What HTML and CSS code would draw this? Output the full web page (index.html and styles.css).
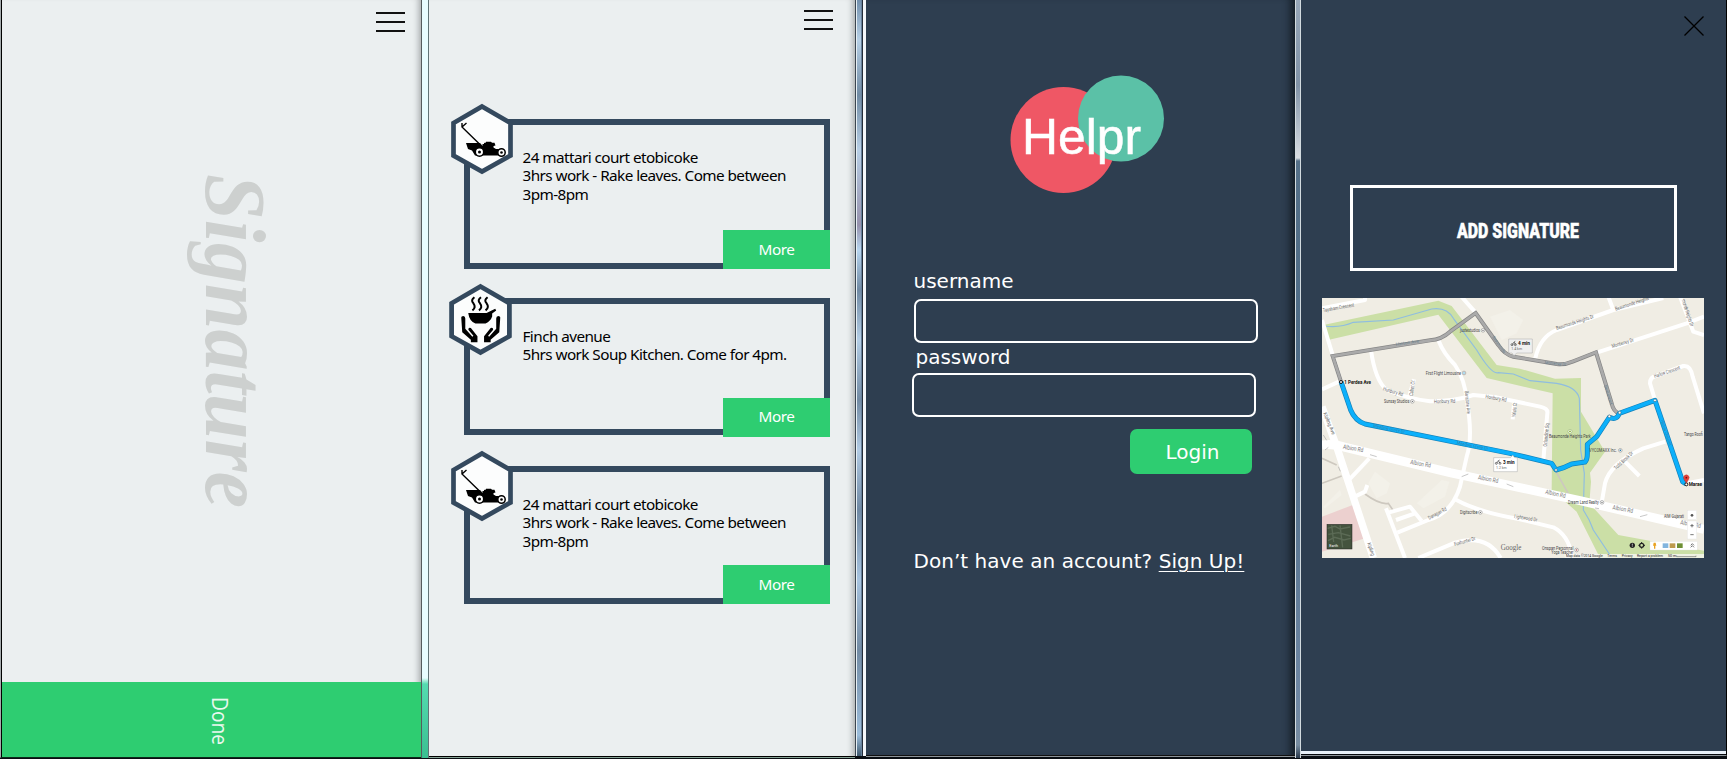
FILE: index.html
```
<!DOCTYPE html>
<html lang="en">
<head>
<meta charset="utf-8">
<title>Helpr</title>
<link rel="stylesheet" href="styles.css">
</head>
<body>
<svg width="0" height="0" class="defs" aria-hidden="true">
  <defs>
    <symbol id="hex" viewBox="0 0 64 72">
      <path d="M32 3.500 L60.500 20 V52.500 L32 68.500 L3.500 52.500 V20 Z" fill="#fcfdfd" stroke="#34495e" stroke-width="4.700"/>
    </symbol>
    <symbol id="mower" viewBox="0 0 64 72">
      <path d="M12 20 V24 L31 42.500 M12 24 L16.500 20" fill="none" stroke="#000" stroke-width="1.400"/>
      <path d="M16 40 H30 L32.500 43 V41 H34 V40 L36 39.500 V38.700 H41 L42 39.700 H44.500 L45.500 42.500 L43.500 43 V44.500 L46 46 H52 L55 50 L50 52.500 H25 L22 47.500 L18 46 Z" fill="#000"/>
      <circle cx="29.500" cy="49" r="4.200" fill="#fff" stroke="#000" stroke-width="1.500"/>
      <circle cx="29.500" cy="49" r="1.500"/>
      <circle cx="51.500" cy="49.500" r="3.700" fill="#fff" stroke="#000" stroke-width="1.500"/>
      <circle cx="51.500" cy="49.500" r="1.300"/>
    </symbol>
    <symbol id="soup" viewBox="0 0 64 72">
      <path d="M26 14 q-4 3 -1 6 q3 4 -1 7 M32.500 14 q-4 3 -1 6 q3 4 -1 7 M39 14 q-4 3 -1 6 q3 4 -1 7" fill="none" stroke="#000" stroke-width="2"/>
      <path d="M20 29.500 H38 L46.500 25.500 L47.500 27 L43.500 30 V33 Q42 37.500 37 40 H27 Q21 37.500 20 30 Z"/>
      <path id="hand" d="M13 34 Q13 32.500 15 32.500 Q17 32.500 17 35 V45 L24 53 L25 52 L20 46 Q20 43.500 22.500 44.500 L29 52.500 V58.500 H22.500 V56 L14 48.500 Z"/>
      <use href="#hand" transform="translate(64.500 0) scale(-1 1)"/>
    </symbol>
  </defs>
</svg>
<main class="screens">
  <section class="screen sign">
    <header class="bar"><span class="menu"><i></i><i></i><i></i></span></header>
    <svg class="signature" viewBox="0 0 419 640">
      <text transform="translate(204 132) rotate(90)" x="0" y="0" textLength="334" lengthAdjust="spacingAndGlyphs">Signature</text>
    </svg>
    <div class="done">
      <svg viewBox="0 0 60 75" width="60" height="75"><text transform="translate(23 15) rotate(90)" textLength="48" lengthAdjust="spacingAndGlyphs">Done</text></svg>
    </div>
  </section>
  <div class="gutter g1"></div>
  <section class="screen jobs">
    <header class="bar"><span class="menu"><i></i><i></i><i></i></span></header>
    <article class="job first">
      <svg class="badge"><use href="#hex"/><use href="#mower"/></svg>
      <p>24 mattari court etobicoke<br>3hrs work - Rake leaves. Come between<br>3pm-8pm</p>
      <a class="more">More</a>
    </article>
    <article class="job second">
      <svg class="badge"><use href="#hex"/><use href="#soup"/></svg>
      <p>Finch avenue<br>5hrs work Soup Kitchen. Come for 4pm.</p>
      <a class="more">More</a>
    </article>
    <article class="job third">
      <svg class="badge"><use href="#hex"/><use href="#mower"/></svg>
      <p>24 mattari court etobicoke<br>3hrs work - Rake leaves. Come between<br>3pm-8pm</p>
      <a class="more">More</a>
    </article>
  </section>
  <div class="gutter g2"><i></i></div>
  <section class="screen login">
    <svg class="logo" viewBox="0 0 160 124">
      <circle cx="56.500" cy="68" r="53" fill="#ef5765"/>
      <circle cx="114" cy="46.500" r="43" fill="#5bc1a7"/>
      <text x="15" y="82" textLength="119" lengthAdjust="spacingAndGlyphs">Helpr</text>
    </svg>
    <form>
      <label>username</label>
      <div class="field"></div>
      <label class="pw">password</label>
      <div class="field pwf"></div>
      <div class="submit"><span>Login</span></div>
    </form>
    <p class="signup">Don’t have an account? <a>Sign Up!</a></p>
  </section>
  <div class="gutter g3"></div>
  <section class="screen detail">
    <header class="close"><svg viewBox="0 0 20 20" width="20" height="20"><path d="M.5 .5 L19.500 19.500 M19.500 .5 L.5 19.500" stroke="#000" stroke-width="1.300"/></svg></header>
    <div class="add"><svg viewBox="0 0 122 24" width="122" height="24"><text x="0" y="19" textLength="122" lengthAdjust="spacingAndGlyphs">ADD SIGNATURE</text></svg></div>
    <svg class="map" viewBox="36 24 1146 780" preserveAspectRatio="none">
      <rect x="36" y="24" width="1146" height="780" fill="#f0ede4"/>
      <path d="M36 680 L128 645 L165 745 L36 785 Z" fill="#ecd0cf"/>
      <g fill="#cbdfa6">
        <path d="M40 105 L385 32 L425 48 L560 225 L630 236 L735 266 L813 264 V365 L885 485 L840 548 L843 575 L838 640 L925 735 L1182 782 V804 H870 L800 665 L725 600 L728 310 L530 264 L385 74 L54 150 Z"/>
      </g>
      <g fill="#f3f1e9">
        <path d="M540 80 L600 60 L640 90 L620 130 L575 150 Z"/><path d="M175 580 L195 545 L240 580 L230 610 L200 625 Z"/><path d="M320 640 L395 570 L418 575 L405 620 L340 655 Z"/><path d="M40 650 L90 600 L95 615 L45 655 Z"/>
      </g>
      <path d="M42 108 Q90 115 130 97 L250 90 Q320 70 365 57 Q410 50 430 85 L500 180 Q545 255 565 248 L610 252 L660 272 L740 280 Q800 290 808 325 L812 480 L823 550 L820 660 Q840 690 850 720 L900 795" fill="none" stroke="#8fbde0" stroke-width="3.500"/>
      <g fill="none" stroke="#cdc8bf" stroke-width="5"><path d="M36 505 L80 525 M36 580 L95 558 M165 612 Q210 645 235 640 L250 662 M738 545 L780 620"/></g>
      <g fill="none" stroke="#fff" stroke-width="12" stroke-linejoin="round">
        <path d="M36 55 L165 30 V20 M450 15 L497 68 M36 90 L68 195 L93 275 M93 272 L36 298"/>
        <path d="M183 180 Q195 270 230 300 Q290 325 360 334 Q430 335 490 315 L560 322 L690 350 Q715 355 712 370 L700 510"/>
        <path d="M385 150 Q400 190 435 225 Q465 270 470 330 Q490 440 470 500 L450 590 Q425 670 355 690 L262 728"/>
        <path d="M312 268 L298 318 M612 340 L608 388 M435 628 Q500 665 630 688 L730 712 Q775 735 785 796"/>
        <path d="M676 205 Q690 140 740 120 L910 60 L1060 24 M910 60 L895 20 M860 188 L1130 100 L1182 80 M1110 20 L1150 125 L1182 135"/>
        <path d="M1035 330 L1020 280 Q1020 260 1040 257 L1120 228 Q1142 225 1148 260 L1182 370"/>
        <path d="M1066 455 L1000 475 Q900 520 885 580 L875 638 M945 515 L988 558 M1120 582 L1182 570"/>
        <path d="M178 505 L112 575 M130 622 L165 605 L172 585 M228 655 L285 804 M235 668 L300 650 L335 693 M258 690 L315 670 M325 804 L435 758 Q530 730 572 804"/>
      </g>
      <path d="M36 350 L80 470 L190 804" fill="none" stroke="#fff" stroke-width="22"/>
      <path d="M36 465 Q70 460 110 473 L420 548 L640 595 L810 632 L1182 718" fill="none" stroke="#fff" stroke-width="27"/>
      <path d="M40 435 l10 16 M45 480 l10 -8 M180 494 l20 6 M455 560 l20 -8 M590 582 l20 8 M85 530 l6 14 M990 680 l22 -6 M855 654 l12 2" stroke="#aaa" stroke-width="2"/>
      <path d="M93 275 L68 198 L360 151 Q395 148 420 125 L497 69 L565 165 Q585 195 610 200 L740 222 Q765 225 790 214 L858 187 L905 340 Q910 365 928 370" fill="none" stroke="#858585" stroke-width="12"/>
      <path d="M93 275 L68 198 L360 151 Q395 148 420 125 L497 69 L565 165 Q585 195 610 200 L740 222 Q765 225 790 214 L858 187 L905 340 Q910 365 928 370" fill="none" stroke="#aaa" stroke-width="8"/>
      <g fill="none" stroke-linejoin="round">
        <path d="M93 275 L122 360 Q135 392 165 402 L600 490 L725 520 L738 540 Q760 535 785 522 L825 516 Q832 510 832 490 V463 L860 440 L898 382 Q920 392 928 370 L1035 331 L1118 575 L1128 582" stroke="#1581b8" stroke-width="15"/>
        <path d="M93 275 L122 360 Q135 392 165 402 L600 490 L725 520 L738 540 Q760 535 785 522 L825 516 Q832 510 832 490 V463 L860 440 L898 382 Q920 392 928 370 L1035 331 L1118 575 L1128 582" stroke="#0cb0fb" stroke-width="11"/>
      </g>
      <g fill="#fff" stroke="#356" stroke-width="1.500"><circle cx="738" cy="540" r="4"/><circle cx="898" cy="379" r="4"/><circle cx="929" cy="368" r="4"/><circle cx="1035" cy="331" r="4"/></g>
      <g fill="#fff" stroke="#111" stroke-width="3"><circle cx="93" cy="276" r="4.500"/><circle cx="1129" cy="583" r="4.500"/></g>
      <path d="M1129 580 L1122 568 A8.500 8.500 0 1 1 1136 568 Z" fill="#e5433a" stroke="#b32c25"/><circle cx="1129" cy="563" r="2.500" fill="#711"/>
      <g class="road">
        <text transform="translate(40 66) rotate(-10)" textLength="94" lengthAdjust="spacingAndGlyphs">Taysham Crescent</text>
        <text transform="translate(218 301) rotate(17)" textLength="62" lengthAdjust="spacingAndGlyphs">Hunbury Rd</text>
        <text transform="translate(308 318) rotate(-82)" textLength="46" lengthAdjust="spacingAndGlyphs">Cabot Ct</text>
        <text transform="translate(372 340) rotate(-2)" textLength="64" lengthAdjust="spacingAndGlyphs">Honbury Rd</text>
        <text transform="translate(526 325) rotate(9)" textLength="64" lengthAdjust="spacingAndGlyphs">Honbury Rd</text>
        <text transform="translate(464 304) rotate(84)" textLength="68" lengthAdjust="spacingAndGlyphs">Barrstone Ave</text>
        <text transform="translate(616 382) rotate(-84)" textLength="44" lengthAdjust="spacingAndGlyphs">Valois Ct</text>
        <text transform="translate(40 370) rotate(68)" textLength="70" lengthAdjust="spacingAndGlyphs">Kipling Ave</text>
        <text transform="translate(358 689) rotate(-28)" textLength="60" lengthAdjust="spacingAndGlyphs">Danagan Rd</text>
        <text transform="translate(434 768) rotate(-16)" textLength="66" lengthAdjust="spacingAndGlyphs">Foxhunter Dr</text>
        <text transform="translate(612 684) rotate(9)" textLength="70" lengthAdjust="spacingAndGlyphs">Lightwood Dr</text>
        <text transform="translate(172 760) rotate(72)" textLength="40" lengthAdjust="spacingAndGlyphs">Kipling</text>
        <text transform="translate(740 120) rotate(-18)" textLength="118" lengthAdjust="spacingAndGlyphs">Beaumonde Heights Dr</text>
        <text transform="translate(917 62) rotate(-18)" textLength="106" lengthAdjust="spacingAndGlyphs">Beaumonde Heights</text>
        <text transform="translate(907 174) rotate(-17)" textLength="68" lengthAdjust="spacingAndGlyphs">Monterrey Dr</text>
        <text transform="translate(1115 30) rotate(72)" textLength="84" lengthAdjust="spacingAndGlyphs">monde Heights Dr</text>
        <text transform="translate(1034 264) rotate(-19)" textLength="82" lengthAdjust="spacingAndGlyphs">Harlow Crescent</text>
        <text transform="translate(710 470) rotate(-84)" textLength="70" lengthAdjust="spacingAndGlyphs">Orlandine Sq</text>
        <text transform="translate(918 540) rotate(-43)" textLength="72" lengthAdjust="spacingAndGlyphs">Todd Brook Dr</text>
      </g>
      <g class="on-route">
        <text transform="translate(258 167) rotate(-8)" textLength="70" lengthAdjust="spacingAndGlyphs">Hinton Ave</text>
        <text transform="translate(546 142) rotate(55)" textLength="60" lengthAdjust="spacingAndGlyphs">Beaumonde</text>
        <text transform="translate(704 222) rotate(5)" textLength="64" lengthAdjust="spacingAndGlyphs">Monterrey Dr</text>
        <text transform="translate(882 287) rotate(73)" textLength="60" lengthAdjust="spacingAndGlyphs">Beaumont</text>
        <text transform="translate(190 411) rotate(11)" textLength="96" lengthAdjust="spacingAndGlyphs">Meadow Grove Dr</text>
        <text transform="translate(440 462) rotate(11)" textLength="96" lengthAdjust="spacingAndGlyphs">Meadow Grove Dr</text>
        <text transform="translate(1052 392) rotate(71)" textLength="80" lengthAdjust="spacingAndGlyphs">Harlow Crescent</text>
      </g>
      <g class="main-road">
        <text transform="translate(98 476) rotate(10)" textLength="62" lengthAdjust="spacingAndGlyphs">Albion Rd</text>
        <text transform="translate(300 522) rotate(10)" textLength="62" lengthAdjust="spacingAndGlyphs">Albion Rd</text>
        <text transform="translate(503 568) rotate(10)" textLength="62" lengthAdjust="spacingAndGlyphs">Albion Rd</text>
        <text transform="translate(705 611) rotate(12)" textLength="62" lengthAdjust="spacingAndGlyphs">Albion Rd</text>
        <text transform="translate(907 658) rotate(10)" textLength="62" lengthAdjust="spacingAndGlyphs">Albion Rd</text>
        <text transform="translate(1110 703) rotate(10)" textLength="62" lengthAdjust="spacingAndGlyphs">Albion Rd</text>
      </g>
      <g class="place">
        <text x="450" y="126" textLength="60" lengthAdjust="spacingAndGlyphs">justestudios</text>
        <text x="347" y="254" textLength="106" lengthAdjust="spacingAndGlyphs">First Flight Limousine</text>
        <text x="222" y="339" textLength="76" lengthAdjust="spacingAndGlyphs">Sunsay Studios</text>
        <text x="450" y="672" textLength="52" lengthAdjust="spacingAndGlyphs">Digitscribe</text>
        <text x="717" y="445" textLength="125" lengthAdjust="spacingAndGlyphs">Beaumonde Heights Park</text>
        <text x="838" y="486" textLength="82" lengthAdjust="spacingAndGlyphs">VYCOMAXX Inc.</text>
        <text x="774" y="642" textLength="92" lengthAdjust="spacingAndGlyphs">Dream Land Realty</text>
        <text x="1062" y="683" textLength="60" lengthAdjust="spacingAndGlyphs">AIM Gujarati</text>
        <text x="1122" y="438" textLength="56" lengthAdjust="spacingAndGlyphs">Tango Roofi</text>
        <text x="696" y="779" textLength="94" lengthAdjust="spacingAndGlyphs">Onspan Personnal</text>
        <text x="724" y="791" textLength="66" lengthAdjust="spacingAndGlyphs">Yoga Teacher</text>
      </g>
      <g class="strong"><text x="103" y="281" textLength="80" lengthAdjust="spacingAndGlyphs">1 Perdea Ave</text><text x="1136" y="588" textLength="40" lengthAdjust="spacingAndGlyphs">Marae</text></g>
      <g fill="#fff" stroke="#777" stroke-width="1.500"><circle cx="519" cy="121" r="5.500"/><circle cx="462" cy="249" r="5.500"/><circle cx="307" cy="334" r="5.500"/><circle cx="511" cy="667" r="5.500"/><circle cx="780" cy="424" r="6" stroke="#89a75a"/><circle cx="931" cy="481" r="5.500"/><circle cx="876" cy="637" r="5.500"/><circle cx="800" cy="780" r="5.500"/></g>
      <g fill="#555"><circle cx="519" cy="121" r="2"/><circle cx="462" cy="249" r="2" fill="#29c"/><circle cx="307" cy="334" r="2"/><circle cx="511" cy="667" r="2"/><circle cx="780" cy="424" r="2.500" fill="#690"/><circle cx="931" cy="481" r="2.500" fill="#27a"/><circle cx="876" cy="637" r="2"/><circle cx="800" cy="780" r="2" fill="#a33"/></g>
      <g stroke="#aaa" stroke-width="1.500">
        <path d="M596 147 H667 V189 H620 L612 197 L606 189 H596 Z" fill="#efefef"/>
        <path d="M551 503 H602 L608 495 L614 503 H622 V545 H551 Z" fill="#fff"/>
      </g>
      <g fill="none" stroke="#333" stroke-width="1.800"><path d="M607 164 l5 -8 l5 8 M612 156 l4 -2"/><circle cx="606" cy="164" r="3"/><circle cx="616" cy="164" r="3"/><path d="M560 520 l5 -8 l5 8 M565 512 l4 -2"/><circle cx="559" cy="520" r="3"/><circle cx="570" cy="520" r="3"/></g>
      <g class="strong"><text x="624" y="165" textLength="36" lengthAdjust="spacingAndGlyphs">4 min</text><text x="579" y="521" textLength="35" lengthAdjust="spacingAndGlyphs">3 min</text></g>
      <g class="dist"><text x="604" y="181" textLength="32" lengthAdjust="spacingAndGlyphs">1.4 km</text><text x="558" y="538" textLength="32" lengthAdjust="spacingAndGlyphs">1.2 km</text></g>
      <rect x="51" y="703" width="75" height="74" fill="#44533e" stroke="#222" stroke-width="1.500"/>
      <path d="M53 715 l22 -6 l15 8 l30 -6 M55 733 l30 -5 l36 10 M54 752 l20 -10 l28 8 l20 -5 M90 706 l8 66 M65 706 l6 50" fill="none" stroke="#5c6b56" stroke-width="4"/>
      <text x="58" y="770" class="earth" textLength="26" lengthAdjust="spacingAndGlyphs">Earth</text>
      <text x="572" y="779" class="google" textLength="62" lengthAdjust="spacingAndGlyphs">Google</text>
      <rect x="764" y="792" width="418" height="12" fill="#f7f6f2" opacity=".8"/>
      <g class="legal"><text x="768" y="801" textLength="110" lengthAdjust="spacingAndGlyphs">Map data ©2014 Google</text><text x="892" y="801" textLength="29" lengthAdjust="spacingAndGlyphs">Terms</text><text x="935" y="801" textLength="33" lengthAdjust="spacingAndGlyphs">Privacy</text><text x="981" y="801" textLength="78" lengthAdjust="spacingAndGlyphs">Report a problem</text><text x="1074" y="801" textLength="25" lengthAdjust="spacingAndGlyphs">50 m</text><path d="M1100 797 V800 H1158 V797" fill="none" stroke="#444" stroke-width="1.500"/></g>
      <g fill="#fff" stroke="#ddd"><rect x="1132" y="661" width="28" height="28"/><rect x="1132" y="693" width="28" height="54"/><rect x="1020" y="754" width="142" height="26"/></g>
      <path d="M1141 707 h10 M1146 702 v10 M1141 734 h10 M1142 766 l5 -5 l5 5 M1142 772 l5 -5 l5 5" fill="none" stroke="#444" stroke-width="2.200"/>
      <circle cx="1146" cy="676" r="4" fill="#555"/>
      <path d="M1031 758 h6 l2 9 h-3 v9 h-4 v-9 h-3 Z" fill="#e9a323"/>
      <rect x="1058" y="760" width="17" height="14" fill="#82b4de"/><rect x="1079" y="760" width="17" height="14" fill="#bd9a4e"/><rect x="1101" y="760" width="17" height="14" fill="#6e8f35"/>
      <circle cx="967" cy="766" r="8" fill="#222"/><path d="M967 761 v6 M967 769 v2" stroke="#fff" stroke-width="2"/>
      <circle cx="995" cy="766" r="6" fill="none" stroke="#222" stroke-width="4"/><path d="M995 756 v4 M995 772 v4 M985 766 h4 M1001 766 h4" stroke="#222" stroke-width="3"/>
    </svg>
  </section>
</main>
</body>
</html>
```

FILE: styles.css
```
* { box-sizing: border-box; }
body { margin: 0; background: #090d12; overflow: hidden; }
svg { overflow: visible; }
.defs { display: block; height: 0; }
.screens { display: grid; grid-template-columns: 421px 8px 426px 11px 429px 6px 426px; height: 759px; }
.screen { display: flex; flex-direction: column; }

.sign { background: #ebeff0; height: 758px; border-left: 1px solid #a5abad; border-bottom: 1px solid #0d2a1b; box-shadow: inset 1px 0 #000, inset -7px 0 6px -5px #a3a7a8; }
.bar { display: flex; justify-content: flex-end; flex: none; }
.menu { display: flex; flex-direction: column; width: 29px; gap: 7px; }
.menu i { height: 2px; background: #111; }
.sign .bar { padding: 12px 16px 0 0; height: 42px; }
.signature { width: 419px; height: 640px; flex: none; margin-left: 1px; }
.signature text { font: italic bold 86px "Liberation Serif", serif; fill: #cdd0cf; }
.done { display: flex; justify-content: center; height: 75px; margin-left: 1px; background: #2ecd71; }
.done svg { margin-left: 14px; }
.done text { font: 21px "Open Sans", sans-serif; fill: #eaf8ef; }

.g1 { background: linear-gradient(#e8fdff 0 678px, #55dcb0 684px, #3abf91); border-left: 1px solid #555c5e; border-right: 1px solid #617477; height: 758px; }
.g2 { background: linear-gradient(90deg, #3b454f 0 1px, #e8f0f5 1px 2px, #9dbad3 2px 5px, #66809b 5px 7px, #252d38 7px 8px, #f5f8fb 8px); height: 756px; }
.g2 i { display: block; width: 4px; height: 756px; margin-left: 2px; background: linear-gradient(#7390ad, #b7d0e6 40px, #718ba4 95px, #b8cfe6 150px, #9792ad 225px, #b7d5ef 250px, #718aa4 290px, #b4cee6 340px, #738ba4 400px, #b2cbe4 450px, #7089a4 510px, #a8c4e0 580px, #738ba4 650px, #9cbddb 735px, #405a70); }
.g3 { background: linear-gradient(#97a7b8, #8092a6 85px, #dadee2 158px, #557088 161px, #4d6b86 400px, #6f87a3 700px, #778ca0 745px, #28384a); border: solid #d3dbdf; border-width: 0 1px; height: 758px; }

.jobs { background: #ebeff0; height: 758px; border-bottom: 1px solid #87a496; box-shadow: inset 0 -1px #000, inset -7px 0 6px -5px #a3a7a8; }
.jobs .bar { padding: 10px 22px 0 0; height: 119px; }
.job { position: relative; display: flex; justify-content: space-between; align-items: flex-start; margin-left: 35px; width: 366px; border: 6px solid #34495e; font: 15.300px/18.700px "Noto Sans", sans-serif; color: #000; flex: none; }
.job p { margin: 0; padding: 22.500px 0 0 52.500px; white-space: nowrap; letter-spacing: -.57px; }
.first { height: 150px; margin-bottom: 29px; }
.second { height: 137px; margin-bottom: 31px; }
.third { height: 138px; }
.badge { position: absolute; left: -20px; top: -22px; width: 64px; height: 72px; }
.second .badge { left: -22px; top: -21px; width: 65px; height: 73px; }
.more { position: absolute; right: -6px; bottom: -6px; width: 107px; height: 39px; background: #2ecd71; color: #fff; text-align: center; line-height: 38px; letter-spacing: -.4px; }
.second .more { bottom: -8px; line-height: 36px; }

.login { background: #2e3e50; height: 756px; border-bottom: 1px solid #111; box-shadow: inset -10px 0 9px -6px #111a22, 0 1px #8d9499; color: #fff; font: 20px/24px "DejaVu Sans", sans-serif; }
.logo { width: 160px; height: 124px; margin: 72px 0 0 141px; flex: none; }
.logo text { font: 50px "Liberation Sans", sans-serif; fill: #fff; stroke: #fff; stroke-width: .5px; }
.login form { display: flex; flex-direction: column; align-items: flex-start; padding: 73px 0 0 47.500px; }
.login label { height: 30px; }
.field { width: 344px; height: 44px; border: 2px solid #fff; border-radius: 7px; }
.pw { margin: 2px 0 -2px 2px; }
.pwf { margin-left: -2px; }
.submit { display: flex; align-items: center; justify-content: center; width: 122px; height: 45px; margin: 12px 0 0 216.500px; padding-left: 3px; border-radius: 7px; background: #2ecd71; }
.signup { margin: 75px 0 0 47.500px; white-space: nowrap; letter-spacing: .04px; }
.signup a { text-decoration: underline; text-decoration-thickness: 1px; text-underline-offset: 3px; }

.detail { background: #2e3e50; height: 756px; border-right: 1px solid #000; border-bottom: 1px solid #8d9499; box-shadow: inset 0 -1px #05080c, inset 0 -4px #e8f0f8; }
.close { display: flex; justify-content: flex-end; padding: 16px 22px 0 0; height: 185px; flex: none; }
.add { display: flex; align-items: center; justify-content: center; flex: none; width: 327px; height: 86px; margin-left: 49px; padding: 6px 0 0 8px; border: 3px solid #fff; }
.add text { font: 900 21px Roboto, sans-serif; fill: #fff; stroke: #fff; stroke-width: .5px; }
.map { width: 382px; height: 260px; margin: 27px 0 0 21px; flex: none; overflow: hidden; }
.map text { font-family: Roboto, sans-serif; font-size: 16px; fill: #666; }
.map .on-route text { font-size: 13px; fill: #4f7286; opacity: .7; }
.map .main-road text { font-size: 19px; fill: #777; }
.map .place text { font-size: 14px; fill: #444; }
.map .strong text { font-size: 15px; font-weight: 700; fill: #111; }
.map .dist text { font-size: 12px; }
.map .earth { font-size: 12px; fill: #fff; }
.map .google { font: 23px "Liberation Serif", serif; fill: #666; }
.map .legal text { font-size: 11px; fill: #222; }
```
